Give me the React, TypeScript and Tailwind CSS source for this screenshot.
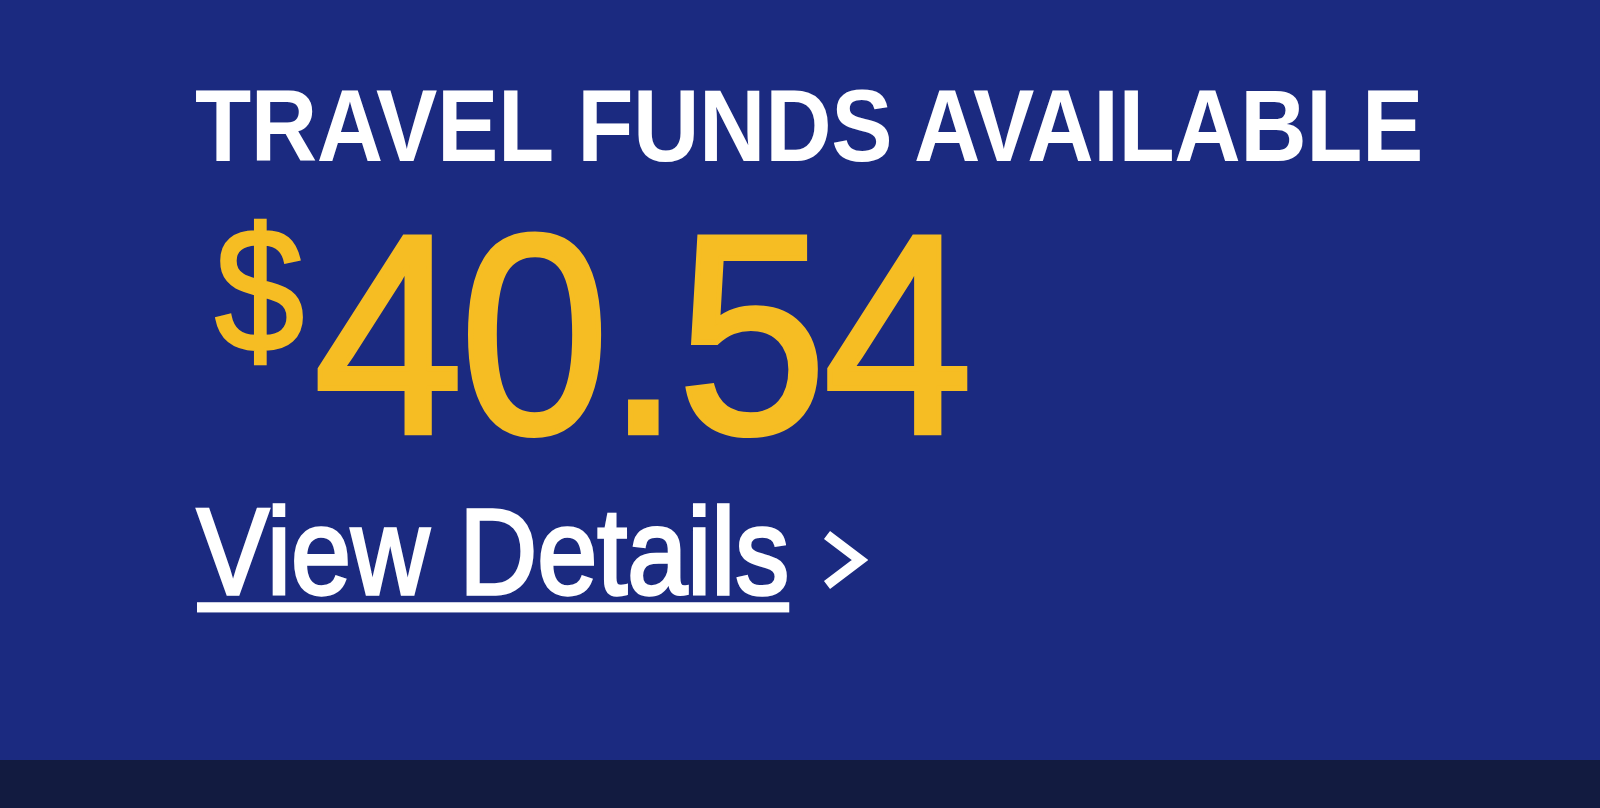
// Balance card: label, big amount with raised dollar sign, and a details link
function FundsBalance({ amount }: { amount: string }) {
  return (
    <div className="flex h-[268px] items-start text-[#f6bd23]">
      <span className="mt-[6px] ml-[20px] mr-[10px] origin-top scale-y-[1.1] text-[160px] leading-none [-webkit-text-stroke:3px_#f6bd23]">
        $
      </span>
      <span className="-mt-[4px] origin-top scale-y-[1.06] text-[268px] leading-none tracking-[-3px] [-webkit-text-stroke:5px_#f6bd23]">
        {amount}
      </span>
    </div>
  );
}

export default function App() {
  return (
    <div className="flex h-[808px] w-[1600px] flex-col overflow-hidden font-['Liberation_Sans',Arial,sans-serif]">
      <section className="flex h-[760px] flex-col bg-[#1b2a80] pt-[74px] pl-[195px]">
        <h2 className="h-[92px] origin-top-left scale-y-[1.115] text-[92px] font-bold leading-none tracking-[-0.4px] text-white">
          TRAVEL FUNDS AVAILABLE
        </h2>

        <div className="mt-[30px]">
          <FundsBalance amount="40.54" />
        </div>

        <a href="#" className="mt-[27px] flex items-start pl-[2px] text-white">
          <span className="origin-top-left scale-y-[1.135] text-[108px] leading-none underline decoration-[9px] underline-offset-[7px] [-webkit-text-stroke:3px_white]">
            View Details
          </span>
          <svg width="50" height="66" viewBox="0 0 50 66" className="mt-[35px] ml-[29px]" aria-hidden>
            <polyline points="9,9 42,34 9,59" fill="none" stroke="#fff" strokeWidth="10" />
          </svg>
        </a>
      </section>
      <div className="h-[48px] bg-[#121b40]" />
    </div>
  );
}
